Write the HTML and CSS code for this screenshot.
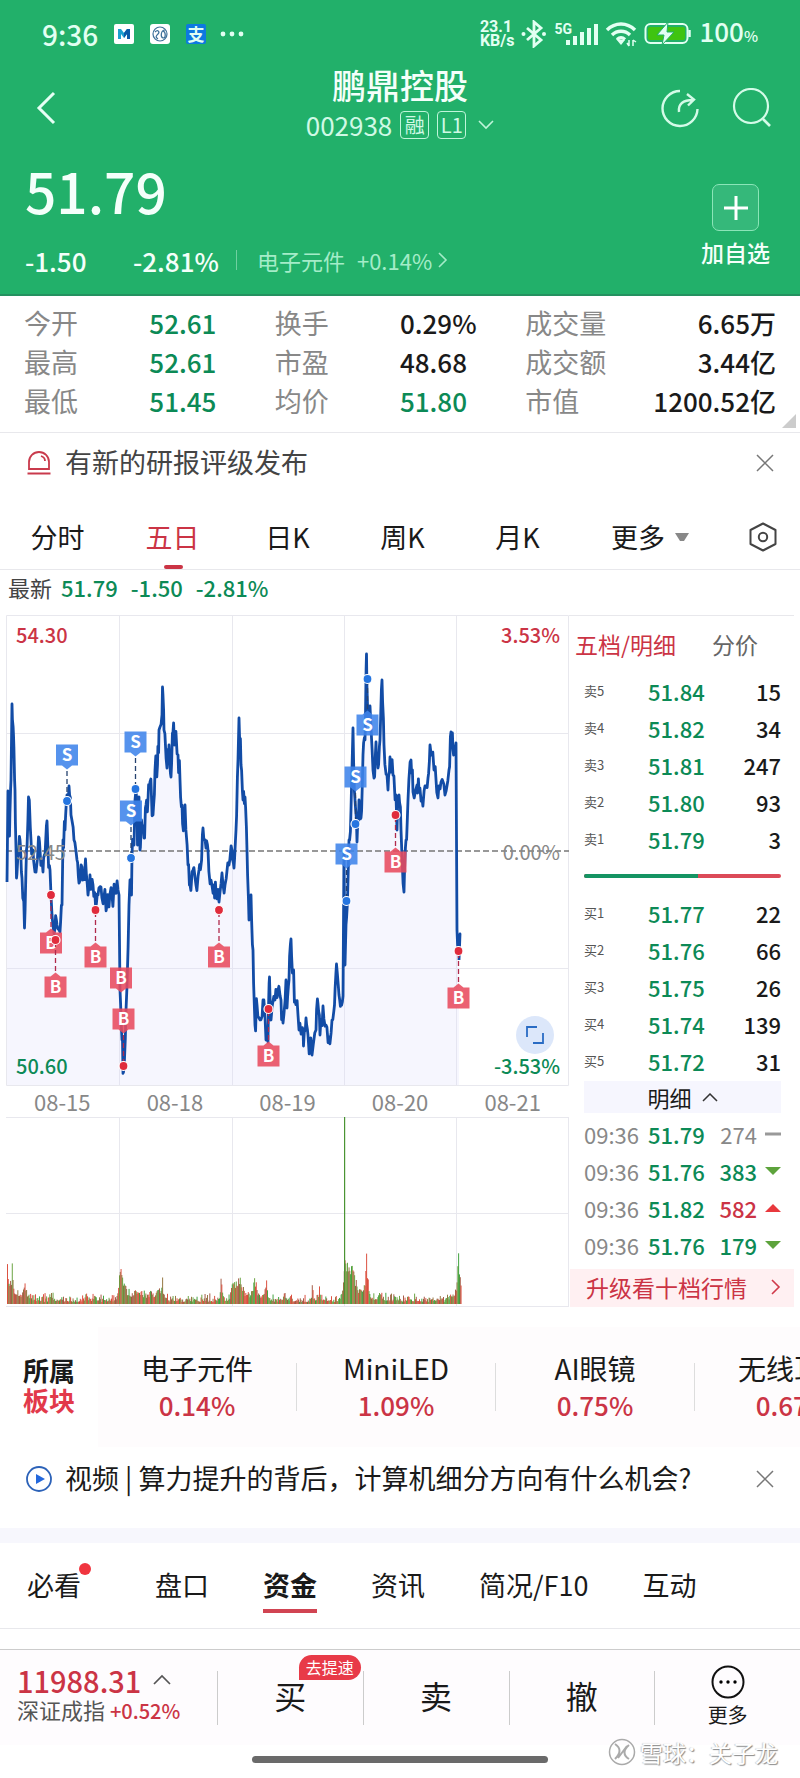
FILE: index.html
```html
<!DOCTYPE html>
<html lang="zh-CN">
<head>
    <meta charset="UTF-8">
    <meta name="viewport" content="width=device-width, initial-scale=1.0">
    <title>鹏鼎控股 002938</title>
    <link rel="stylesheet" href="styles.css">
</head>
<body>
    <header class="header">
        <div class="status-bar">
            <span class="clock">9:36</span>
            <svg class="app-icon" viewBox="0 0 20 20"><rect width="20" height="20" rx="2" fill="#fff"/><path d="M4 15V5h3l3 4 3-4h3v10h-3v-5l-3 4-3-4v5z" fill="#1b9fd0"/><path d="M10 9l3-4h3v10h-3v-5l-3 4z" fill="#0b5aa8"/></svg>
            <svg class="app-icon" viewBox="0 0 20 20"><rect width="20" height="20" rx="3" fill="#fff"/><circle cx="10" cy="10" r="7" fill="none" stroke="#3d6f99" stroke-width="1.2"/><path d="M5 8c3-3 5 0 3 2s-3 3 0 5M15 6c-4 0-5 7-2 8 3 0 3-6 0-7" fill="none" stroke="#3d6f99" stroke-width="1.2"/></svg>
            <span class="app-icon alipay">支</span>
            <svg class="dots" viewBox="0 0 24 6"><circle cx="3" cy="3" r="2.4"/><circle cx="12" cy="3" r="2.4"/><circle cx="21" cy="3" r="2.4"/></svg>
            <div class="status-right">
                <span class="speed"><span>23.1</span><span>KB/s</span></span>
                <svg width="26" height="28" viewBox="0 0 26 28"><path d="M6 8l14 12-7 6V2l7 6L6 20" fill="none" stroke="#e2fff2" stroke-width="2.8"/><circle cx="2.5" cy="14" r="2" fill="#e2fff2"/><circle cx="23" cy="14" r="2" fill="#e2fff2"/></svg>
                <span class="signal">
                    <b>5G</b>
                    <svg width="32" height="22" viewBox="0 0 32 22"><path d="M0 17h4v5H0zM7 13h4v9H7zM14 9h4v13h-4zM21 5h4v17h-4zM28 1h4v21h-4z" fill="#e2fff2"/></svg>
                </span>
                <svg width="32" height="26" viewBox="0 0 32 26"><path d="M2 9c8-8 20-8 28 0M7 14c5-5 13-5 18 0M12 18.500c3-2.500 5-2.500 8 0" fill="none" stroke="#e2fff2" stroke-width="3.400"/><path d="M11 18l5 6 4-5z" fill="#e2fff2"/><path d="M24 25v-6M28 19v6M22 22l2 3M28 19l3 2" stroke="#e2fff2" stroke-width="1.500"/></svg>
                <svg width="48" height="24" viewBox="0 0 48 24"><rect x="1.500" y="2" width="42" height="19" rx="5" fill="none" stroke="#e2fff2" stroke-width="2"/><rect x="4" y="5" width="37" height="13" rx="2" fill="#3fc410"/><path d="M45.500 8v7" stroke="#e2fff2" stroke-width="2.500"/><path d="M24 0l-11 13h7l-2 10 12-13h-7z" fill="#e2fff2" stroke="#22b06a"/></svg>
                <span class="battery">100<small>%</small></span>
            </div>
        </div>

        <div class="nav">
            <button class="icon-button back" aria-label="返回"><svg width="20" height="34" viewBox="0 0 20 34"><path d="M18 2L3 17l15 15" fill="none" stroke="#e6fff4" stroke-width="3"/></svg></button>
            <div class="stock-title">
                <h1>鹏鼎控股</h1>
                <div class="stock-code">
                    <span>002938</span>
                    <span class="tag">融</span>
                    <span class="tag">L1</span>
                    <svg width="16" height="10" viewBox="0 0 16 10"><path d="M1 1l7 7 7-7" fill="none" stroke="#bff5da" stroke-width="1.600"/></svg>
                </div>
            </div>
            <div class="nav-actions">
                <button class="icon-button" aria-label="分享"><svg width="40" height="40" viewBox="0 0 40 40"><path d="M20 3a17.500 17.500 0 1 0 17.500 18M19 24c-1-8 4-12 14-12M27 6l7 5.500-6 6" fill="none" stroke="#d4fbe8" stroke-width="2.400"/></svg></button>
                <button class="icon-button" aria-label="搜索"><svg width="40" height="40" viewBox="0 0 40 40"><circle cx="19" cy="18" r="17" fill="none" stroke="#d4fbe8" stroke-width="2.200"/><path d="M31 31l7 7" stroke="#d4fbe8" stroke-width="2.600"/></svg></button>
            </div>
        </div>

        <div class="quote">
            <div>
                <div class="price">51.79</div>
                <div class="change">
                    <span class="diff">-1.50</span>
                    <span class="rate">-2.81%</span>
                    <a class="industry" href="#"><span>电子元件</span><span>+0.14%</span><svg width="10" height="16" viewBox="0 0 10 16"><path d="M1 1l7 7-7 7" fill="none" stroke="#a4ecc8" stroke-width="1.600"/></svg></a>
                </div>
            </div>
            <button class="add-button"><span class="plus"><svg width="24" height="24" viewBox="0 0 24 24"><path d="M12 0v24M0 12h24" stroke="#fff" stroke-width="3"/></svg></span>加自选</button>
        </div>
    </header>

    <dl class="stats">
        <div><dt>今开</dt><dd class="green">52.61</dd></div>
        <div><dt>换手</dt><dd>0.29%</dd></div>
        <div><dt>成交量</dt><dd>6.65万</dd></div>
        <div><dt>最高</dt><dd class="green">52.61</dd></div>
        <div><dt>市盈</dt><dd>48.68</dd></div>
        <div><dt>成交额</dt><dd>3.44亿</dd></div>
        <div><dt>最低</dt><dd class="green">51.45</dd></div>
        <div><dt>均价</dt><dd class="green">51.80</dd></div>
        <div><dt>市值</dt><dd>1200.52亿</dd></div>
    </dl>

    <div class="notice">
        <svg width="26" height="26" viewBox="0 0 26 26"><path d="M3 19V12a10 10 0 0 1 20 0v7zM1.500 23.500h23M15 6c3 1 4 3 4 5" fill="none" stroke="#c93a4c" stroke-width="1.800"/></svg>
        <span>有新的研报评级发布</span>
        <button class="icon-button" aria-label="关闭"><svg width="18" height="18" viewBox="0 0 18 18"><path d="M1 1l16 16M17 1L1 17" stroke="#777" stroke-width="1.500"/></svg></button>
    </div>

    <nav class="chart-tabs">
        <button>分时</button>
        <button class="active">五日</button>
        <button>日K</button>
        <button>周K</button>
        <button>月K</button>
        <button class="more">更多<svg width="14" height="9" viewBox="0 0 14 9"><path d="M0 0h14L9 8H5z" fill="#888"/></svg></button>
        <button class="settings" aria-label="设置"><svg width="28" height="30" viewBox="0 0 28 30"><path d="M14 1.500L26.500 8v14L14 28.500 1.500 22V8z" fill="none" stroke="#444" stroke-width="2" stroke-linejoin="round"/><circle cx="14" cy="15" r="4.200" fill="none" stroke="#444" stroke-width="2"/></svg></button>
    </nav>

    <div class="latest">最新<span>51.79</span><span>-1.50</span><span>-2.81%</span></div>

    <main class="market">
        <section class="chart">
            <div class="price-chart">
                <svg viewBox="6 615 563 471" id="priceChart">
                    <path class="grid" d="M6.500 615.500H568.500V1085.500H6.500zM6 733.500h563M6 968.500h563M119.500 615v471M232.500 615v471M344.500 615v471M456.500 615v471"/>
                    <path class="area" id="area"/>
                    <path class="middle" d="M6 851h563"/>
                    <path class="line" id="line"/>
                    <g id="markers"></g>
                    <text class="axis red" x="16" y="643">54.30</text>
                    <text class="axis red" x="560" y="643" text-anchor="end">3.53%</text>
                    <text class="axis gray" x="16" y="860">52.45</text>
                    <text class="axis gray" x="560" y="860" text-anchor="end">0.00%</text>
                    <text class="axis green" x="16" y="1074">50.60</text>
                    <text class="axis green" x="560" y="1074" text-anchor="end">-3.53%</text>
                </svg>
                <button class="expand" aria-label="全屏"><svg width="18" height="18" viewBox="0 0 18 18"><path d="M1 11V1h10M17 7v10H7" fill="none" stroke="#2a6cc4" stroke-width="1.800"/></svg></button>
            </div>
            <div class="dates"><span>08-15</span><span>08-18</span><span>08-19</span><span>08-20</span><span>08-21</span></div>
            <svg viewBox="6 1117 563 190" id="volumeChart">
                <path class="grid" d="M6 1117.500H569M6 1213.500h563M6 1306.500h563M119.500 1117v189M232.500 1117v189M344.500 1117v189M456.500 1117v189M568.500 1117v189"/>
                <g id="volume"></g>
            </svg>
        </section>

        <section class="depth">
            <div class="depth-tabs"><button class="active">五档/明细</button><button>分价</button></div>
            <table class="orders">
                <tr><th>卖5</th><td>51.84</td><td>15</td></tr>
                <tr><th>卖4</th><td>51.82</td><td>34</td></tr>
                <tr><th>卖3</th><td>51.81</td><td>247</td></tr>
                <tr><th>卖2</th><td>51.80</td><td>93</td></tr>
                <tr><th>卖1</th><td>51.79</td><td>3</td></tr>
            </table>
            <div class="ratio"><span style="width: 58%"></span></div>
            <table class="orders">
                <tr><th>买1</th><td>51.77</td><td>22</td></tr>
                <tr><th>买2</th><td>51.76</td><td>66</td></tr>
                <tr><th>买3</th><td>51.75</td><td>26</td></tr>
                <tr><th>买4</th><td>51.74</td><td>139</td></tr>
                <tr><th>买5</th><td>51.72</td><td>31</td></tr>
            </table>
            <button class="detail-toggle">明细<svg width="16" height="9" viewBox="0 0 16 9"><path d="M1 8l7-7 7 7" fill="none" stroke="#333" stroke-width="1.500"/></svg></button>
            <table class="trades">
                <tr><th>09:36</th><td class="green">51.79</td><td class="gray">274</td><td><svg width="16" height="8" viewBox="0 0 16 8"><path d="M0 4h16" stroke="#999" stroke-width="3"/></svg></td></tr>
                <tr><th>09:36</th><td class="green">51.76</td><td class="green">383</td><td><svg width="16" height="8" viewBox="0 0 16 8"><path d="M0 0h16L8 8z" fill="#5da33c"/></svg></td></tr>
                <tr><th>09:36</th><td class="green">51.82</td><td class="red">582</td><td><svg width="16" height="8" viewBox="0 0 16 8"><path d="M0 8h16L8 0z" fill="#e8383d"/></svg></td></tr>
                <tr><th>09:36</th><td class="green">51.76</td><td class="green">179</td><td><svg width="16" height="8" viewBox="0 0 16 8"><path d="M0 0h16L8 8z" fill="#5da33c"/></svg></td></tr>
            </table>
            <a class="upgrade" href="#">升级看十档行情<svg width="10" height="16" viewBox="0 0 10 16"><path d="M1 1l7 7-7 7" fill="none" stroke="#d0394a" stroke-width="1.600"/></svg></a>
        </section>
    </main>

    <section class="sectors">
        <h2>所属<br><em>板块</em></h2>
        <div class="sector-list">
            <a href="#">电子元件<span>0.14%</span></a>
            <a href="#">MiniLED<span>1.09%</span></a>
            <a href="#">AI眼镜<span>0.75%</span></a>
            <a href="#">无线耳机<span>0.67%</span></a>
        </div>
    </section>

    <div class="notice video">
        <svg width="26" height="26" viewBox="0 0 26 26"><circle cx="13" cy="13" r="12" fill="none" stroke="#2c62b8" stroke-width="1.800"/><path d="M10 8l9 5-9 5z" fill="#2468dc"/></svg>
        <span>视频 | 算力提升的背后，计算机细分方向有什么机会?</span>
        <button class="icon-button" aria-label="关闭"><svg width="18" height="18" viewBox="0 0 18 18"><path d="M1 1l16 16M17 1L1 17" stroke="#777" stroke-width="1.500"/></svg></button>
    </div>

    <nav class="info-tabs">
        <button class="unread">必看</button>
        <button>盘口</button>
        <button class="active">资金</button>
        <button>资讯</button>
        <button>简况/F10</button>
        <button>互动</button>
    </nav>

    <footer class="trade-bar">
        <div class="index">
            <div class="index-value">11988.31<svg width="18" height="11" viewBox="0 0 18 11"><path d="M1 10l8-8 8 8" fill="none" stroke="#555" stroke-width="1.700"/></svg></div>
            <div class="index-name">深证成指 <span>+0.52%</span></div>
        </div>
        <button class="trade">买<span class="badge">去提速</span></button>
        <button class="trade">卖</button>
        <button class="trade">撤</button>
        <button class="trade trade-more"><svg width="34" height="34" viewBox="0 0 34 34"><circle cx="17" cy="17" r="15.500" fill="none" stroke="#111" stroke-width="2"/><circle cx="10" cy="17" r="1.700"/><circle cx="17" cy="17" r="1.700"/><circle cx="24" cy="17" r="1.700"/></svg>更多</button>
    </footer>

    <div class="home-area">
        <div class="home-indicator"></div>
        <div class="watermark"><svg width="28" height="28" viewBox="0 0 28 28"><circle cx="14" cy="14" r="12.500" fill="none" stroke="#aaa" stroke-width="1.500"/><path d="M7 6c6 4 6 9 0 15M21 7c-6 5-6 10 0 14M10 20l9-12" fill="none" stroke="#aaa" stroke-width="2"/></svg>雪球：关子龙</div>
    </div>

    <script src="script.js"></script>
</body>
</html>
```
FILE: styles.css
```css
:root {
    --header: #22b06a;
    --green: #0c8a56;
    --red: #cb3445;
    --gray: #888;
    --line: #e8e8ec;
}

* {
    box-sizing: border-box;
}

body {
    margin: 0;
    background-color: #fff;
    color: #1a1a1a;
    font-family: "Noto Sans CJK SC", sans-serif;
    font-size: 27px;
    overflow-x: hidden;
}

button {
    padding: 0;
    border: none;
    background: none;
    color: inherit;
    font: inherit;
    cursor: pointer;
}

a {
    color: inherit;
    text-decoration: none;
}

svg {
    display: block;
    flex-shrink: 0;
}

.green { color: var(--green); fill: var(--green); }
.red { color: var(--red); fill: var(--red); }
.gray { color: var(--gray); fill: var(--gray); }

/* Header */
.header {
    background-color: var(--header);
    color: #f4fffa;
    border-bottom: 2px solid #249160;
}

.status-bar {
    display: flex;
    align-items: center;
    height: 62px;
    padding: 5px 42px 0;
    color: #e2fff2;
}

.clock {
    width: 72px;
    font-size: 28px;
    font-weight: 500;
}

.app-icon {
    width: 20px;
    height: 20px;
    margin-right: 16px;
}

.alipay {
    margin-right: 14px;
    border-radius: 2px;
    background-color: #0d79e0;
    font-size: 17px;
    font-weight: bold;
    line-height: 19px;
    text-align: center;
}

.dots {
    width: 24px;
    fill: #e2fff2;
}

.status-right {
    display: flex;
    align-items: center;
    gap: 7px;
    margin-left: auto;
}

.speed {
    display: flex;
    flex-direction: column;
    font-family: Roboto, sans-serif;
    font-size: 16px;
    font-weight: bold;
    line-height: 14px;
}

.signal {
    display: flex;
    align-items: flex-end;
    width: 44px;
}

.signal b {
    align-self: flex-start;
    width: 12px;
    font-family: Roboto, sans-serif;
    font-size: 14px;
    line-height: 12px;
}

.battery {
    font-size: 26px;
    font-weight: 500;
    line-height: 32px;
}

.battery small {
    font-size: 15px;
}

.nav {
    display: flex;
    align-items: center;
    justify-content: space-between;
    height: 92px;
    padding: 0 28px 0 36px;
}

.back {
    width: 104px;
}

.stock-title {
    align-self: flex-start;
    text-align: center;
}

.stock-title h1 {
    margin: 0;
    font-size: 34px;
    font-weight: 500;
    line-height: 46px;
}

.stock-code {
    display: flex;
    align-items: center;
    gap: 8px;
    color: #d0f9e5;
    font-size: 26px;
    line-height: 34px;
}

.tag {
    width: 29px;
    border: 1px solid #bff5da;
    border-radius: 4px;
    font-size: 20px;
    line-height: 26px;
}

.stock-code svg {
    margin-left: 4px;
}

.nav-actions {
    display: flex;
    gap: 32px;
}

.quote {
    display: flex;
    justify-content: space-between;
    padding: 0 30px 0 25px;
}

.price {
    font-size: 55px;
    font-weight: 500;
    line-height: 72px;
}

.change {
    display: flex;
    align-items: center;
    height: 68px;
    font-size: 26px;
    font-weight: 500;
}

.diff {
    width: 108px;
}

.industry {
    display: flex;
    align-items: center;
    gap: 12px;
    margin-left: 17px;
    padding-left: 20px;
    border-left: 1px solid #6fd0a0;
    color: #a4ecc8;
    font-size: 22px;
    font-weight: 400;
    line-height: 20px;
}

.industry svg {
    margin-left: -6px;
}

.add-button {
    display: flex;
    flex-direction: column;
    align-items: center;
    padding-top: 30px;
    font-size: 23px;
    font-weight: 500;
    line-height: 42px;
}

.plus {
    display: flex;
    align-items: center;
    justify-content: center;
    width: 47px;
    height: 47px;
    border: 1px solid #8be5b8;
    border-radius: 7px;
    background-color: #35b87a;
}

/* Day figures */
.stats {
    position: relative;
    display: grid;
    grid-template-columns: 1fr 1fr 1fr;
    margin: 0;
    padding: 7px 24px 12px;
    border-bottom: 1px solid var(--line);
    line-height: 39px;
}

.stats::after {
    content: "";
    position: absolute;
    right: 4px;
    bottom: 4px;
    border: 7px solid #ccc;
    border-top-color: transparent;
    border-left-color: transparent;
}

.stats div {
    display: flex;
}

.stats dt {
    width: 50%;
    color: var(--gray);
}

.stats dd {
    margin: 0;
    font-size: 26px;
    font-weight: 500;
    white-space: nowrap;
}

.stats div:nth-child(3n) {
    justify-content: space-between;
}

.stats div:nth-child(3n) dt {
    width: auto;
}

.notice {
    display: flex;
    align-items: center;
    gap: 13px;
    height: 60px;
    padding: 0 26px;
    color: #444;
    line-height: 36px;
}

.notice span {
    padding-bottom: 2px;
}

.notice .icon-button {
    margin-left: auto;
}

.chart-tabs {
    display: flex;
    height: 77px;
    padding-top: 12px;
    border-bottom: 1px solid var(--line);
}

.chart-tabs button {
    position: relative;
    flex: 115;
    line-height: 60px;
}

.chart-tabs .active {
    color: var(--red);
}

.chart-tabs .active::after {
    content: "";
    position: absolute;
    bottom: 0;
    left: 50%;
    width: 19px;
    height: 4px;
    margin-left: -9px;
    border-radius: 2px;
    background-color: var(--red);
}

.chart-tabs .more {
    flex: 150;
    display: flex;
    align-items: center;
    justify-content: center;
    gap: 10px;
}

.chart-tabs .settings {
    flex: 75;
    display: flex;
    align-items: center;
    justify-content: center;
}

.latest {
    display: flex;
    gap: 13px;
    height: 45px;
    padding-left: 8px;
    color: #444;
    font-size: 22px;
    line-height: 34px;
}

.latest span {
    color: var(--green);
    font-weight: 500;
}

.latest span:first-child {
    margin-left: -4px;
}

/* Charts */
.market {
    display: flex;
    padding: 0 6px;
}

.chart {
    flex: 1;
    min-width: 0;
}

.chart svg {
    overflow: visible;
}

.price-chart {
    position: relative;
}

.grid {
    fill: none;
    stroke: #e8e8ee;
}

.area {
    fill: #dcdcfa;
    fill-opacity: 0.25;
}

.line {
    fill: none;
    stroke: #124ca6;
    stroke-width: 2.8;
    stroke-linejoin: round;
}

.middle {
    stroke: #777;
    stroke-width: 1.4;
    stroke-dasharray: 6 3;
}

.axis {
    font-size: 20px;
    font-weight: 500;
}

.axis.gray {
    font-weight: 400;
}

.marker-text {
    fill: #fff;
    font-size: 17px;
    font-weight: bold;
    text-anchor: middle;
}

.expand {
    position: absolute;
    right: 15px;
    bottom: 32px;
    display: flex;
    align-items: center;
    justify-content: center;
    width: 38px;
    height: 38px;
    border-radius: 50%;
    background-color: #dce7fa;
}

.dates {
    display: flex;
    color: var(--gray);
    font-size: 22px;
    line-height: 31px;
}

.dates span {
    flex: 1;
    text-align: center;
}

/* Order book */
.depth {
    display: flex;
    flex-direction: column;
    width: 225px;
    border-top: 1px solid var(--line);
    font-size: 22px;
}

.depth-tabs {
    display: flex;
    gap: 36px;
    height: 56px;
    padding-left: 6px;
    color: #666;
    font-size: 23px;
    line-height: 52px;
}

.depth-tabs .active {
    color: var(--red);
}

table {
    width: 197px;
    margin-left: 15px;
    border-collapse: collapse;
}

tr {
    height: 37px;
}

th, td {
    padding: 0;
    font-weight: 500;
    line-height: 32px;
    text-align: right;
}

th {
    font-weight: 400;
    text-align: left;
}

.orders th {
    width: 64px;
    color: #555;
    font-size: 13px;
}

.orders td:nth-child(2) {
    width: 60px;
    color: var(--green);
    text-align: left;
}

.ratio {
    height: 4px;
    margin: 17px 13px 16px 15px;
    border-radius: 2px;
    background-color: #dc4a58;
    overflow: hidden;
}

.ratio span {
    display: block;
    height: 4px;
    background-color: #159463;
}

.detail-toggle {
    display: flex;
    align-items: center;
    justify-content: center;
    gap: 10px;
    height: 32px;
    margin: 2px 13px 2px 15px;
    background-color: #f6f6fe;
    line-height: 28px;
}

.trades th {
    width: 64px;
    color: var(--gray);
}

.trades td:nth-child(2) {
    text-align: left;
}

.trades td:nth-child(3) {
    width: 44px;
}

.trades td:last-child {
    width: 24px;
}

.trades .gray {
    font-weight: 400;
}

.trades td svg {
    margin-left: auto;
}

.upgrade {
    display: flex;
    align-items: center;
    justify-content: space-between;
    height: 38px;
    margin-top: auto;
    margin-left: 1px;
    padding: 0 13px 2px 16px;
    background-color: #fff0f2;
    color: var(--red);
    font-size: 23px;
    line-height: 34px;
}

/* Related sectors */
.sectors {
    display: flex;
    align-items: center;
    height: 120px;
    margin-top: 20px;
}

.sectors h2 {
    flex-shrink: 0;
    width: 98px;
    margin: 0;
    padding: 0 0 4px 23px;
    font-size: 26px;
    line-height: 30px;
}

.sectors em {
    color: #e2394a;
    font-style: normal;
}

.sector-list {
    display: flex;
    flex: 1;
    align-items: center;
    height: 120px;
    background-color: #fefcfd;
    overflow: hidden;
}

.sector-list a {
    display: flex;
    flex: 0 0 199px;
    flex-direction: column;
    justify-content: center;
    height: 48px;
    padding-bottom: 10px;
    border-right: 1px solid #ddd;
    font-size: 28px;
    line-height: 46px;
    text-align: center;
    white-space: nowrap;
}

.sector-list span {
    color: var(--red);
    font-size: 26px;
    font-weight: 500;
    line-height: 28px;
}

.video {
    height: 81px;
    padding-bottom: 18px;
    color: #1a1a1a;
}

.info-tabs {
    display: flex;
    gap: 54px;
    height: 101px;
    padding: 14px 27px 0;
    border-top: 15px solid #f7f7fd;
    border-bottom: 1px solid var(--line);
}

.info-tabs button {
    position: relative;
    height: 56px;
    line-height: 56px;
    white-space: nowrap;
}

.info-tabs .unread {
    margin-right: 20px;
}

.info-tabs .unread::after {
    content: "";
    position: absolute;
    top: 6px;
    right: -10px;
    width: 12px;
    height: 12px;
    border-radius: 50%;
    background-color: #f0353f;
}

.info-tabs .active {
    border-bottom: 4px solid #d14452;
    font-weight: bold;
}

/* Bottom bar */
.trade-bar {
    display: flex;
    align-items: center;
    height: 96px;
    margin-top: 20px;
    border-top: 1px solid #ccc;
    background-color: #fefcfe;
}

.index {
    width: 217px;
    padding: 0 0 8px 17px;
    color: #555;
    font-size: 22px;
    line-height: 26px;
}

.index-value {
    display: flex;
    align-items: center;
    gap: 12px;
    color: var(--red);
    font-size: 29px;
    font-weight: 500;
    line-height: 32px;
}

.index-name span {
    color: var(--red);
    font-size: 20px;
    font-weight: 500;
}

.trade {
    position: relative;
    flex: 1;
    height: 54px;
    border-left: 1px solid #ccc;
    font-size: 32px;
    line-height: 48px;
    padding-bottom: 6px;
}

.trade-more {
    display: flex;
    flex-direction: column;
    align-items: center;
    justify-content: center;
    padding: 0;
    font-size: 20px;
    line-height: 32px;
}

.badge {
    position: absolute;
    top: -16px;
    right: 2px;
    width: 62px;
    border-radius: 13px 13px 13px 0;
    background-color: #e83a48;
    color: #fff;
    font-size: 16px;
    line-height: 25px;
}

.home-area {
    position: relative;
    height: 33px;
    padding-top: 11px;
}

.home-indicator {
    width: 37%;
    height: 7px;
    margin: 0 auto;
    border-radius: 4px;
    background-color: #6a6a6a;
}

.watermark {
    position: absolute;
    right: 22px;
    top: -9px;
    display: flex;
    align-items: center;
    gap: 4px;
    color: #fff;
    font-size: 23px;
    line-height: 32px;
    text-shadow: 1px 1px 1px #888, -1px 0 1px #ccc;
}
```
FILE: script.js
```js
// Five day price line, [x, y] in chart units
const points = [
    [7,882],[8,791],[9.5,836],[11,780],[12,704],[13.5,735],[15,790],[16.5,878],[18,850],[20,840],[22,878],[24.5,928],
    [26.5,850],[28.5,797],[31,840],[33,850],[35,872],[38.5,837],[40,850],[43,872],[45,855],[47,821],[48,850],[50,870],
    [51,895],[52,915],[55,928],[57,925],[60,932],[62,905],[63,840],[65,830],[67,795],[69,786],[71,815],[74,840],[77,860],
    [79,883],[82,867],[84,875],[85.5,859],[88,895],[90,875],[93,885],[95.5,905],[98,895],[101,887],[104,897],[107,905],
    [109,907],[112,895],[115,890],[118,890],[119,895],[120,990],[122,1040],[123.5,1072],[126,1010],[129,905],[130,880],
    [131.5,895],[132,855],[134,845],[135,800],[136,790],[137.5,845],[139,797],[140,850],[141.5,820],[144,838],[146,805],
    [148,800],[150,782],[153,815],[155,770],[157.5,765],[159,730],[162,715],[162.5,687],[164,730],[167,768],[169,745],
    [171,777],[173,732],[175,735],[178,755],[180,780],[182,805],[184,825],[185,805],[188,865],[190,885],[193,870],
    [196,885],[199,870],[201,865],[203,828],[206,848],[208,850],[211,880],[214,885],[216,892],[219,902],[222,873],
    [225,885],[229,865],[232,850],[234,868],[236,830],[238,760],[239,718],[241,765],[243,800],[245,797],[247,850],
    [249,920],[251,895],[253,950],[255,1025],[257,1005],[260,1020],[263,1000],[266,1040],[268,1042],[269.5,977],
    [271,1020],[275,1000],[278,990],[281,1000],[283,1023],[286,980],[287,1008],[289,980],[291,939],[293,970],[295,1000],
    [298,1015],[299,1030],[302,1032],[303.5,1046],[306,1018],[308,1035],[312,1055],[316,1030],[318,1004],[320,1035],
    [323,1006],[326,1025],[329,1037],[332,1020],[334.5,1005],[336.5,964],[339,995],[341,1003],[343,996],[344,850],
    [345,965],[346,925],[348,880],[349,840],[351,810],[353,728],[355,800],[357,842],[359,800],[361,818],[363,755],
    [365,740],[366.5,654],[368,720],[370,706],[373,770],[374,778],[376,742],[378,768],[380,740],[382,680],[384,745],
    [387,775],[388,790],[390,757],[393,775],[396,795],[397,830],[399,795],[401,830],[404,892],[406,840],[408,800],
    [411,760],[413,792],[417,785],[419,790],[422,798],[425,786],[428,778],[430,745],[434,770],[438,798],[441,782],
    [445,795],[449,770],[451,732],[453,750],[455,750],[456,743],[457,930],[459,955],[460,934],[459,960]
];

// label, x, label centre y, dot y (null when the dot is shared)
const markers = [
    ['S', 67, 755, 801], ['S', 135.5, 742, 789], ['S', 131, 811, 858],
    ['B', 51, 943, 895], ['B', 55.5, 987, 940], ['B', 95.5, 957, 910],
    ['B', 121, 978, null], ['B', 123.5, 1019, 1066],
    ['B', 219, 957, 910], ['B', 268.5, 1056, 1009],
    ['S', 367.5, 725, 679], ['S', 355.5, 777, 824], ['S', 346.5, 854, 901],
    ['B', 395.5, 862, 815], ['B', 458.5, 998, 951]
];

// Repeatable pseudo random numbers
let seed = 7;
function random() {
    seed = (seed * 16807) % 2147483647;
    return seed / 2147483647;
}

// Add small ticks between the main points
let path = 'M' + points[0];
for (let i = 1; i < points.length; i++) {
    const [x0, y0] = points[i - 1];
    const [x1, y1] = points[i];
    if (x1 - x0 >= 1.5) {
        for (const t of [0.3, 0.7]) {
            path += 'L' + (x0 + (x1 - x0) * t).toFixed(1) + ',' + (y0 + (y1 - y0) * t + (random() - 0.5) * 26).toFixed(1);
        }
    }
    path += 'L' + x1 + ',' + y1;
}
document.getElementById('line').setAttribute('d', path);
document.getElementById('area').setAttribute('d', path + 'V1085H7Z');

let html = '';
for (const [label, x, y, dot] of markers) {
    const color = label === 'S' ? '#3f84ea' : '#e84b5e';
    const dotColor = label === 'S' ? '#2575e0' : '#e02c3c';
    const down = dot === null || dot > y;
    // 'B' labels hang under their dot, the rest point at it
    const side = down ? 1 : -1;
    if (dot !== null) {
        html += `<path d="M${x} ${y + side * 16}V${dot}" stroke="${label === 'S' ? '#26426f' : '#b02a4c'}" stroke-width="1.3" stroke-dasharray="5 3"/>`;
    }
    html += `<path d="M${x - 11} ${y - 10.5}h22v21h-22zM${x - 5} ${y + side * 10.5}l5 ${side * 4}l5 ${-side * 4}z" fill="${color}" fill-opacity="0.88"/>`;
    html += `<text class="marker-text" x="${x}" y="${y + 6}">${label}</text>`;
    if (dot !== null) {
        html += `<circle cx="${x}" cy="${dot}" r="4.500" fill="${dotColor}" stroke="#fff" stroke-width="1.200"/>`;
    }
}
document.getElementById('markers').innerHTML = html;

// Volume peaks: x, height, fall-off width
const peaks = [
    [7, 38, 3], [12, 34, 1], [16, 8, 8], [24, 16, 3], [51, 12, 1], [86, 13, 1], [119.5, 40, 5], [135, 12, 8], [150, 10, 3], [157, 14, 2], [162, 20, 1.5],
    [221, 40, 0.8], [232, 24, 10], [240, 14, 2], [254, 22, 2.5], [266, 18, 1.5], [284, 12, 1], [312, 18, 0.8], [319, 18, 0.8],
    [344.5, 54, 9], [352, 22, 2], [366, 44, 1.5], [380, 10, 2], [408, 5, 2], [450, 8, 5], [458, 52, 2.5]
];
const colors = ['#d8402e', '#5c9a30', '#8a6a30', '#9c4a34', '#2f9a2c', '#d8402e'];
let bars = '';
for (let x = 7; x < 461; x += 0.8) {
    let height = 2 + random() * random() * 9;
    for (const [px, ph, width] of peaks) {
        const d = Math.abs(x - px) / (x < px ? Math.min(width, 1.5) : width);
        height += ph * Math.exp(-d) * (0.65 + random() * 0.35);
    }
    height = Math.min(height, 62);
    const color = colors[Math.floor(random() * colors.length)];
    bars += `<rect x="${x.toFixed(1)}" y="${(1304 - height).toFixed(1)}" width="0.9" height="${height.toFixed(1)}" fill="${color}"/>`;
}
bars += '<rect x="344" y="1117" width="1.200" height="187" fill="#4a9433"/>';
document.getElementById('volume').innerHTML = bars;
```
